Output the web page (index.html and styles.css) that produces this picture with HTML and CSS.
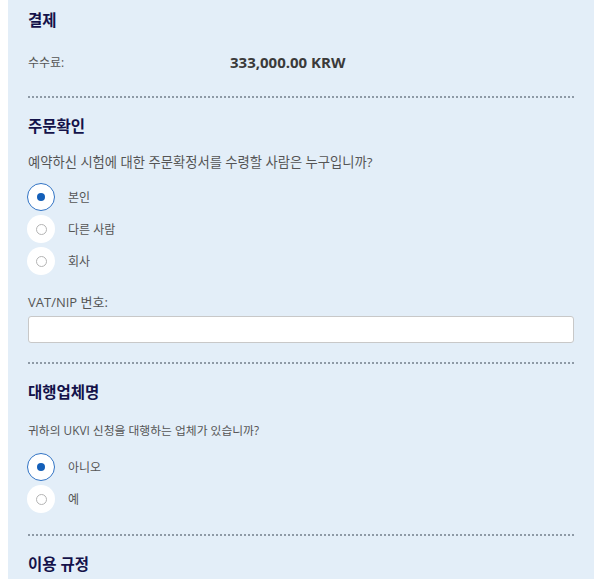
FILE: index.html
```html
<!DOCTYPE html>
<html lang="ko">
<head>
	<meta charset="utf-8">
	<title>결제</title>
	<link rel="stylesheet" href="styles.css">
</head>
<body>
	<div class="panel">
		<h2 class="title first">결제</h2>
		<div class="fee">
			<span class="fee-label">수수료:</span>
			<span class="fee-amount">333,000.00 KRW</span>
		</div>

		<hr class="divider">

		<h2 class="title">주문확인</h2>
		<p class="question">예약하신 시험에 대한 주문확정서를 수령할 사람은 누구입니까?</p>
		<div class="choices">
			<label class="choice"><span class="radio checked"></span>본인</label>
			<label class="choice"><span class="radio"></span>다른 사람</label>
			<label class="choice"><span class="radio"></span>회사</label>
		</div>
		<label class="field-label" for="vat">VAT/NIP 번호:</label>
		<input class="field" id="vat" type="text">

		<hr class="divider">

		<h2 class="title">대행업체명</h2>
		<p class="question small">귀하의 UKVI 신청을 대행하는 업체가 있습니까?</p>
		<div class="choices agency">
			<label class="choice"><span class="radio checked"></span>아니오</label>
			<label class="choice"><span class="radio"></span>예</label>
		</div>

		<hr class="divider">

		<h2 class="title">이용 규정</h2>
	</div>
</body>
</html>
```

FILE: styles.css
```css
body{
	margin: 0;
	font-family: "Open Sans", "Noto Sans CJK KR", sans-serif;
	background: #fff;
}
.panel{
	width: 586px;
	height: 579px;
	margin-left: 8px;
	padding: 8px 20px 0;
	box-sizing: border-box;
	background: #e3eef8;
	overflow: hidden;
}
.title{
	margin: 16px 0 0;
	font-size: 15.5px;
	line-height: 24px;
	font-weight: bold;
	color: #14124a;
}
.title.first{
	margin-top: 0;
}
.fee{
	display: flex;
	align-items: center;
	margin-top: 18px;
	height: 24px;
}
.fee-label{
	width: 202px;
	font-size: 12px;
	color: #555;
}
.fee-amount{
	font-size: 15px;
	font-weight: bold;
	color: #3a3a3a;
}
.divider{
	margin: 22px 0 0;
	border: none;
	border-top: 2px dotted #8e9aa6;
	height: 0;
}
.question{
	margin: 12px 0 0;
	font-size: 13.3px;
	line-height: 24px;
	color: #555;
}
.question.small{
	margin-top: 14px;
	font-size: 11.8px;
}
.choices{
	margin-top: 7px;
}
.choices.agency{
	margin-top: 9px;
}
.choice{
	display: flex;
	align-items: center;
	gap: 13px;
	height: 32px;
	font-size: 12px;
	color: #555;
}
.radio{
	display: flex;
	align-items: center;
	justify-content: center;
	width: 28px;
	height: 28px;
	margin-left: -1px;
	border-radius: 50%;
	background: #fff;
	box-sizing: border-box;
}
.radio::after{
	content: "";
	width: 11px;
	height: 11px;
	border: 1px solid #b4b4b4;
	border-radius: 50%;
	box-sizing: border-box;
}
.radio.checked{
	border: 1px solid #3173c4;
}
.radio.checked::after{
	width: 8px;
	height: 8px;
	border: none;
	background: #145fb8;
}
.field-label{
	display: block;
	margin-top: 13px;
	font-size: 13px;
	line-height: 24px;
	color: #555;
}
.field{
	display: block;
	width: 100%;
	height: 27px;
	margin-top: 2px;
	border: 1px solid #c8c8c8;
	border-radius: 3px;
	background: #fff;
	box-sizing: border-box;
}
.field + .divider{
	margin-top: 19px;
}
.agency + .divider{
	margin-top: 19px;
}
.divider + .title{
	margin-top: 16px;
}
```
